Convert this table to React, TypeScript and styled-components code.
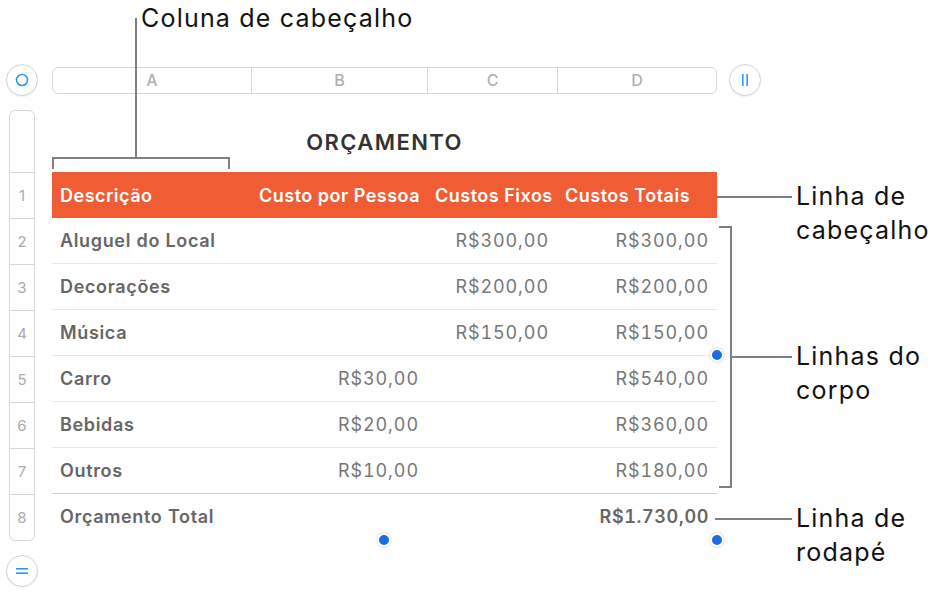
import React from "react";
import styled, { createGlobalStyle } from "styled-components";

const Global = createGlobalStyle`
  html, body { margin: 0; padding: 0; background: #fff; }
  body { font-family: Inter, "Noto Sans", sans-serif; }
`;

const Page = styled.div`
  position: relative;
  width: 947px;
  height: 599px;
  overflow: hidden;
  background: #fff;
  box-sizing: border-box;
  padding: 64px 0 0 6px;
  display: flex;
  flex-direction: column;
`;

const TopRow = styled.div`
  display: flex;
  align-items: center;
  height: 32px;
`;

const RoundButton = styled.div`
  width: 32px;
  height: 32px;
  box-sizing: border-box;
  border-radius: 50%;
  border: 1px solid #d4d4d4;
  background: #fff;
  box-shadow: 0 1px 1px rgba(0, 0, 0, 0.06);
  display: flex;
  align-items: center;
  justify-content: center;
  flex: none;
`;

const ColumnBar = styled.div`
  margin: 0 12px 0 14px;
  width: 665px;
  height: 27px;
  box-sizing: border-box;
  border: 1px solid #d6d6d6;
  border-radius: 6px;
  display: grid;
  grid-template-columns: 199px 176px 130px 1fr;
  overflow: hidden;
`;

const ColumnLetter = styled.div<{ $last?: boolean }>`
  display: flex;
  align-items: center;
  justify-content: center;
  color: #b0b0b0;
  font-size: 16px;
  font-weight: 500;
  border-right: ${(p) => (p.$last ? "none" : "1px solid #d6d6d6")};
`;

const Body = styled.div`
  display: flex;
  margin-top: 14px;
`;

const RowHeaders = styled.div`
  margin-left: 3px;
  width: 26px;
  box-sizing: border-box;
  border: 1px solid #d6d6d6;
  border-radius: 6px;
  display: flex;
  flex-direction: column;
`;

const RowHeaderTop = styled.div`
  height: 61px;
  border-bottom: 1px solid #d6d6d6;
`;

const RowNumber = styled.div<{ $last?: boolean }>`
  height: 45px;
  border-bottom: ${(p) => (p.$last ? "none" : "1px solid #d6d6d6")};
  display: flex;
  align-items: center;
  justify-content: center;
  color: #ababab;
  font-size: 15px;
`;

const Main = styled.div`
  margin-left: 17px;
  width: 665px;
  display: flex;
  flex-direction: column;
`;

const Title = styled.div`
  height: 62px;
  display: flex;
  align-items: center;
  justify-content: center;
  font-size: 22px;
  font-weight: 600;
  color: #333;
  letter-spacing: 1.4px;
  padding-top: 1px;
  box-sizing: border-box;
`;

const Table = styled.div`
  display: grid;
  grid-template-columns: 199px 176px 130px 160px;
`;

const HeaderCell = styled.div`
  height: 46px;
  background: #f05d35;
  color: #fff;
  font-size: 18px;
  font-weight: 600;
  letter-spacing: 0.5px;
  display: flex;
  align-items: center;
  padding: 0 0 0 8px;
  box-sizing: border-box;
  white-space: nowrap;
  overflow: hidden;
`;

const Cell = styled.div<{ $right?: boolean; $bold?: boolean; $line?: string }>`
  height: 46px;
  box-sizing: border-box;
  border-bottom: 1px solid ${(p) => p.$line || "transparent"};
  display: flex;
  align-items: center;
  justify-content: ${(p) => (p.$right ? "flex-end" : "flex-start")};
  padding: ${(p) => (p.$right ? "0 8px 0 0" : "0 0 0 8px")};
  font-size: 18px;
  font-weight: ${(p) => (p.$bold ? 600 : 400)};
  letter-spacing: ${(p) => (p.$bold ? "0.65px" : "0.9px")};
  font-feature-settings: "tnum";
  color: ${(p) => (p.$bold ? "#666" : "#777")};
  white-space: nowrap;
`;

const BottomButtonWrap = styled.div`
  margin-top: 14px;
`;

const Overlay = styled.svg`
  position: absolute;
  left: 0;
  top: 0;
  pointer-events: none;
`;

const Label = styled.div<{ $x: number; $y: number }>`
  position: absolute;
  left: ${(p) => p.$x}px;
  top: ${(p) => p.$y}px;
  font-size: 25px;
  line-height: 34px;
  letter-spacing: 1.2px;
  color: #111;
  white-space: nowrap;
`;

const Dot = styled.div<{ $x: number; $y: number }>`
  position: absolute;
  left: ${(p) => p.$x - 7}px;
  top: ${(p) => p.$y - 7}px;
  width: 14px;
  height: 14px;
  box-sizing: border-box;
  border-radius: 50%;
  background: #1a6de0;
  border: 2px solid #fff;
  box-shadow: 0 0 2px rgba(0, 0, 0, 0.3);
`;

type Row = { label: string; b?: string; c?: string; d?: string };

const rows: Row[] = [
  { label: "Aluguel do Local", c: "R$300,00", d: "R$300,00" },
  { label: "Decorações", c: "R$200,00", d: "R$200,00" },
  { label: "Música", c: "R$150,00", d: "R$150,00" },
  { label: "Carro", b: "R$30,00", d: "R$540,00" },
  { label: "Bebidas", b: "R$20,00", d: "R$360,00" },
  { label: "Outros", b: "R$10,00", d: "R$180,00" },
];

const CircleIcon = () => (
  <svg width="14" height="14" viewBox="0 0 14 14">
    <circle cx="7" cy="7" r="5.5" fill="none" stroke="#2b9af3" strokeWidth="1.6" />
  </svg>
);

const PauseIcon = () => (
  <svg width="10" height="14" viewBox="0 0 10 14">
    <rect x="2" y="1" width="1.6" height="12" fill="#2b9af3" />
    <rect x="6.4" y="1" width="1.6" height="12" fill="#2b9af3" />
  </svg>
);

const EqualIcon = () => (
  <svg width="14" height="10" viewBox="0 0 14 10">
    <rect x="1" y="2" width="12" height="1.6" fill="#2b9af3" />
    <rect x="1" y="6.4" width="12" height="1.6" fill="#2b9af3" />
  </svg>
);

export default function App() {
  const line = "#7f7f7f";
  return (
    <Page>
      <Global />
      <TopRow>
        <RoundButton>
          <CircleIcon />
        </RoundButton>
        <ColumnBar>
          <ColumnLetter>A</ColumnLetter>
          <ColumnLetter>B</ColumnLetter>
          <ColumnLetter>C</ColumnLetter>
          <ColumnLetter $last>D</ColumnLetter>
        </ColumnBar>
        <RoundButton>
          <PauseIcon />
        </RoundButton>
      </TopRow>

      <Body>
        <RowHeaders>
          <RowHeaderTop />
          {[1, 2, 3, 4, 5, 6, 7, 8].map((n) => (
            <RowNumber key={n} $last={n === 8}>
              {n}
            </RowNumber>
          ))}
        </RowHeaders>
        <Main>
          <Title>ORÇAMENTO</Title>
          <Table>
            <HeaderCell>Descrição</HeaderCell>
            <HeaderCell>Custo por Pessoa</HeaderCell>
            <HeaderCell>Custos Fixos</HeaderCell>
            <HeaderCell>Custos Totais</HeaderCell>
            {rows.map((r, i) => {
              const ln = i === rows.length - 1 ? "#cfcfcf" : "#e8e8e8";
              return (
                <React.Fragment key={r.label}>
                  <Cell $bold $line={ln}>{r.label}</Cell>
                  <Cell $right $line={ln}>{r.b}</Cell>
                  <Cell $right $line={ln}>{r.c}</Cell>
                  <Cell $right $line={ln}>{r.d}</Cell>
                </React.Fragment>
              );
            })}
            <Cell $bold>Orçamento Total</Cell>
            <Cell $right />
            <Cell $right />
            <Cell $right $bold>R$1.730,00</Cell>
          </Table>
        </Main>
      </Body>

      <BottomButtonWrap>
        <RoundButton>
          <EqualIcon />
        </RoundButton>
      </BottomButtonWrap>

      <Overlay width="947" height="599" viewBox="0 0 947 599">
        <g stroke={line} strokeWidth="2" fill="none">
          <path d="M136 18 V158" />
          <path d="M53 169 V158 H229 V169" />
          <path d="M717 197 H792" />
          <path d="M719 227 H731 V487 H719" />
          <path d="M731 357 H792" />
          <path d="M715 519 H792" />
        </g>
      </Overlay>

      <Label $x={141} $y={1}>Coluna de cabeçalho</Label>
      <Label $x={796} $y={179}>
        Linha de
        <br />
        cabeçalho
      </Label>
      <Label $x={796} $y={339}>
        Linhas do
        <br />
        corpo
      </Label>
      <Label $x={796} $y={501}>
        Linha de
        <br />
        rodapé
      </Label>

      <Dot $x={717} $y={355} />
      <Dot $x={384} $y={540} />
      <Dot $x={717} $y={540} />
    </Page>
  );
}
